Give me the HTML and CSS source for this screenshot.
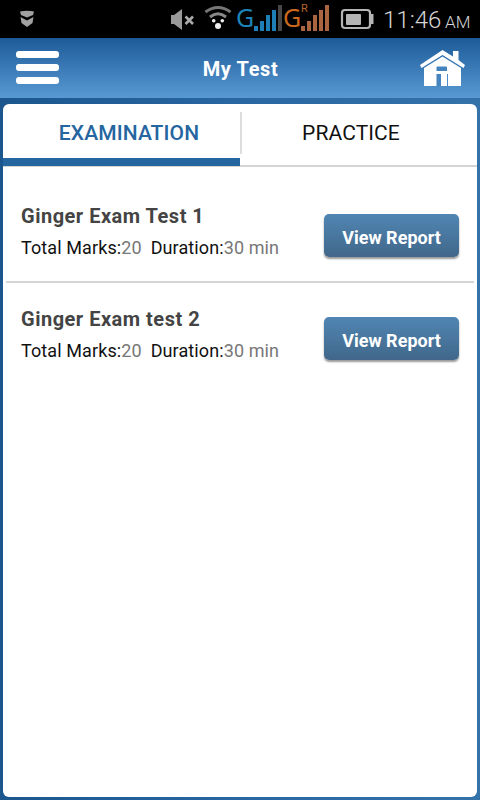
FILE: index.html
```
<!DOCTYPE html>
<html>
    <head>
        <meta charset="utf-8">
        <title>My Test</title>
        <link rel="stylesheet" href="styles.css">
    </head>
    <body>
        <div id="status-bar">
            <svg class="shield" width="16" height="38" fill="#a2a2a2">
                <path d="M1 11.5Q8 10 15 11.5L14 15L8 17.5L2 15Z"/>
                <path d="M1.5 17L8 20.5L14.500 17L13.500 23L8 27L2.500 23Z"/>
            </svg>
            <svg class="mute" width="26" height="38">
                <path d="M1 15H4L12 9V30L4 24H1Z" fill="#999"/>
                <path d="M15.500 16.500L23 24M23 16.500L15.500 24" stroke="#aaa" stroke-width="2.600"/>
            </svg>
            <svg class="wifi" width="28" height="38" fill="none">
                <path d="M1.500 12Q14 3 26.500 12" stroke="#777" stroke-width="3"/>
                <path d="M6 17Q14 10.500 22 17" stroke="#888" stroke-width="3"/>
                <g fill="#eee">
                    <circle cx="9.700" cy="20.700" r="1.800"/>
                    <circle cx="18.300" cy="20.700" r="1.800"/>
                    <circle cx="14" cy="26" r="3"/>
                </g>
            </svg>
            <div class="sim blue">
                <span class="net">G</span>
                <svg width="28" height="38" fill="#1d7fb5">
                    <path d="M0 26h4v5h-4zM6 21h4v10h-4zM12 15h4v16h-4zM18 10h4v21h-4z"/>
                    <path d="M24 5h4v26h-4z" fill="#484848"/>
                </svg>
            </div>
            <div class="sim orange">
                <span class="net">G</span>
                <span class="roaming">R</span>
                <svg width="28" height="38" fill="#a9653f">
                    <path d="M0 26h4v5h-4zM6 21h4v10h-4zM12 15h4v16h-4zM18 10h4v21h-4zM24 5h4v26h-4z"/>
                </svg>
            </div>
            <svg class="battery" width="34" height="38">
                <rect x="2" y="10" width="28" height="18" rx="3" fill="none" stroke="#b5b5b5" stroke-width="2.200"/>
                <path d="M31 14h2.500v10h-2.500z" fill="#b5b5b5"/>
                <rect x="6" y="14" width="15" height="11" rx="1" fill="#b5b5b5"/>
            </svg>
            <span class="clock">11:46</span>
            <span class="am">AM</span>
        </div>
        <div id="header">
            <svg class="menu" width="46" height="40" fill="#fff">
                <rect x="1" y="4" width="43" height="7" rx="3"/>
                <rect x="1" y="17" width="43" height="7" rx="3"/>
                <rect x="1" y="30" width="43" height="7" rx="3"/>
            </svg>
            <h1>My Test</h1>
            <svg class="home" width="46" height="40">
                <path fill="#fff" d="M22.500 3L33 9.500V4H38.500V13L45 18L43.500 21L22.500 8L1.500 21L0 18Z"/>
                <path fill="#fff" d="M22.500 9.500L41 21V39H4V21Z"/>
                <path fill="#4585bf" d="M17.500 19.500h8.500q1 0 1 1v3.500h-10.500v-3.500q0-1 1-1zM16.500 27h4.500v12h-4.500z"/>
                <path fill="#4e8dc5" d="M27 27h1v12h-1z"/>
            </svg>
        </div>
        <div id="main-cont">
            <div id="panel">
                <div id="tabs">
                    <div class="tab active"><span>EXAMINATION</span></div>
                    <div class="tab practice"><span>PRACTICE</span></div>
                </div>
                <div class="test">
                    <div class="info">
                        <h2>Ginger Exam Test 1</h2>
                        <p>Total Marks:<span class="value">20</span><span class="duration">Duration:</span><span class="value">30 min</span></p>
                    </div>
                    <button>View Report</button>
                </div>
                <div class="test">
                    <div class="info">
                        <h2>Ginger Exam test 2</h2>
                        <p>Total Marks:<span class="value">20</span><span class="duration">Duration:</span><span class="value">30 min</span></p>
                    </div>
                    <button>View Report</button>
                </div>
            </div>
        </div>
    </body>
</html>
```
FILE: styles.css
```
* {
    box-sizing: border-box;
}
body {
    margin: 0px;
    height: 800px;
    display: flex;
    flex-direction: column;
    overflow: hidden;
    font-family: Roboto, sans-serif;
    background-color: #fff;
}
h1, h2, p {
    margin: 0px;
}
svg {
    display: block;
    flex-shrink: 0;
}
#status-bar {
    height: 38px;
    flex-shrink: 0;
    display: flex;
    padding-left: 19px;
    background-color: #000;
    line-height: 38px;
    white-space: nowrap;
}
.mute {
    margin-left: 135px;
}
.wifi {
    margin-left: 8px;
}
.sim {
    display: flex;
    width: 47px;
    margin-left: 4px;
}
.orange {
    margin-left: 0px;
}
.net {
    width: 18px;
    font-family: "Noto Sans", sans-serif;
    font-size: 25px;
    line-height: 35px;
    letter-spacing: -1px;
}
.blue .net {
    color: #1d84b8;
}
.orange .net {
    color: #cb681f;
}
.roaming {
    width: 0px;
    font-size: 11px;
    line-height: 18px;
    color: #b9652c;
}
.battery {
    margin-left: 10px;
}
.clock {
    width: 62px;
    margin-left: 9px;
    font-size: 24px;
    font-weight: 300;
    line-height: 40px;
    color: #d4d4d4;
}
.am {
    font-size: 17px;
    font-weight: 300;
    line-height: 44px;
    color: #d4d4d4;
}
#header {
    height: 60px;
    flex-shrink: 0;
    display: flex;
    justify-content: space-between;
    padding: 9px 14px 0px 15px;
    background: linear-gradient(#1c5b98, #5999d3);
}
h1 {
    font-size: 20px;
    font-weight: bold;
    line-height: 44px;
    letter-spacing: 0.6px;
    color: #fff;
}
#main-cont {
    flex: 1;
    display: flex;
    padding: 6px 3px 3px;
    background: linear-gradient(to right, #1b568e, #2967a2 50%, #3472aa);
}
#panel {
    flex: 1;
    border-radius: 6px;
    background-color: #fff;
}
#tabs {
    height: 63px;
    display: flex;
    border-bottom: 2px solid #d4d4d4;
}
.tab {
    flex: 1;
    padding-top: 8px;
    font-size: 21px;
    line-height: 42px;
    letter-spacing: 0.1px;
    text-align: center;
    color: #111;
}
.tab span {
    display: block;
    height: 42px;
}
.active {
    height: 62px;
    border-bottom: 8px solid #2565a0;
    font-weight: 500;
    color: #2565a0;
}
.active span {
    padding-left: 15px;
}
.practice span {
    padding-right: 17px;
    border-left: 2px solid #ddd;
}
.test {
    height: 103px;
    margin: 0px 3px;
    padding: 0px 15px;
    display: flex;
    justify-content: space-between;
    align-items: flex-start;
}
.test:nth-child(2) {
    height: 116px;
    padding-top: 13px;
    border-bottom: 2px solid #d4d4d4;
}
.info {
    padding-top: 22px;
}
h2 {
    font-size: 20px;
    line-height: 28px;
    letter-spacing: 0.5px;
    color: #444;
}
p {
    font-size: 18px;
    line-height: 36px;
    letter-spacing: 0.1px;
    color: #111;
}
.value {
    color: #777;
}
.duration {
    margin-left: 9px;
}
button {
    width: 135px;
    height: 43px;
    margin-top: 34px;
    padding: 4px 0px 0px;
    border: none;
    border-radius: 5px;
    background: linear-gradient(#5086b3, #41678a);
    box-shadow: 0px 2px 2px #999;
    font-family: Roboto, sans-serif;
    font-size: 18px;
    font-weight: bold;
    color: #fff;
}
```
